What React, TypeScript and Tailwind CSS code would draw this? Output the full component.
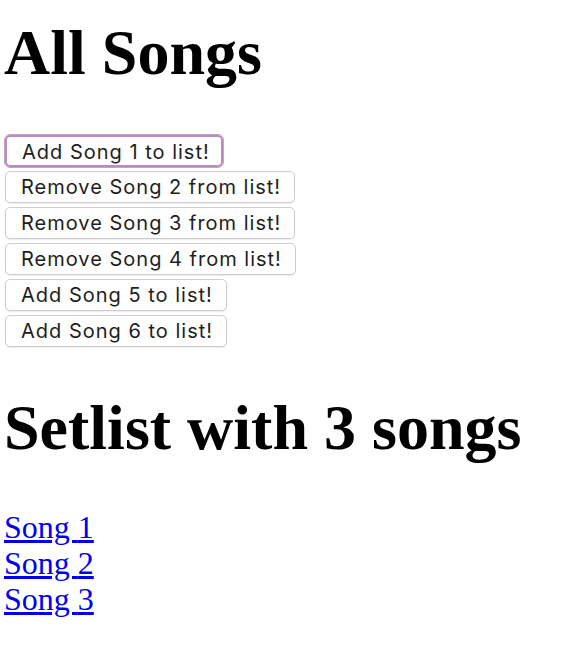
import React from 'react';

const songs = [
  { id: 1, inList: false },
  { id: 2, inList: true },
  { id: 3, inList: true },
  { id: 4, inList: true },
  { id: 5, inList: false },
  { id: 6, inList: false },
];

const setlist = [1, 2, 3];

export default function App() {
  return (
    <div className="min-h-[650px] bg-white px-[4px] pt-[16px] text-black">
      <h1 className="font-['Liberation_Serif',serif] text-[64px] font-bold leading-[74px]">All Songs</h1>

      <div className="ml-px mt-[45px] flex flex-col items-start gap-[4px]">
        {songs.map((song, i) => (
          <button
            key={song.id}
            className={`h-[32px] rounded-[5px] bg-white pl-[15px] font-['Inter',sans-serif] text-[20px] leading-[31px] tracking-[1px] text-[#1e1e1e] ${
              i === 0
                ? 'border-[2px] border-[#bb8cbb] pr-[11px] outline outline-1 outline-[#c7a0c7]'
                : 'border border-[#cdcdcd] pr-[13px] shadow-[0_1px_1px_rgba(0,0,0,0.07)]'
            }`}
          >
            {song.inList ? `Remove Song ${song.id} from list!` : `Add Song ${song.id} to list!`}
          </button>
        ))}
      </div>

      <h1 className="mt-[44px] font-['Liberation_Serif',serif] text-[64px] font-bold leading-[74px]">
        Setlist with {setlist.length} songs
      </h1>

      <div className="mt-[44px] flex flex-col items-start">
        {setlist.map((id) => (
          <a key={id} href="#" className="font-['Liberation_Serif',serif] text-[32px] leading-[36px] text-[#0000ee] underline">
            Song {id}
          </a>
        ))}
      </div>
    </div>
  );
}
